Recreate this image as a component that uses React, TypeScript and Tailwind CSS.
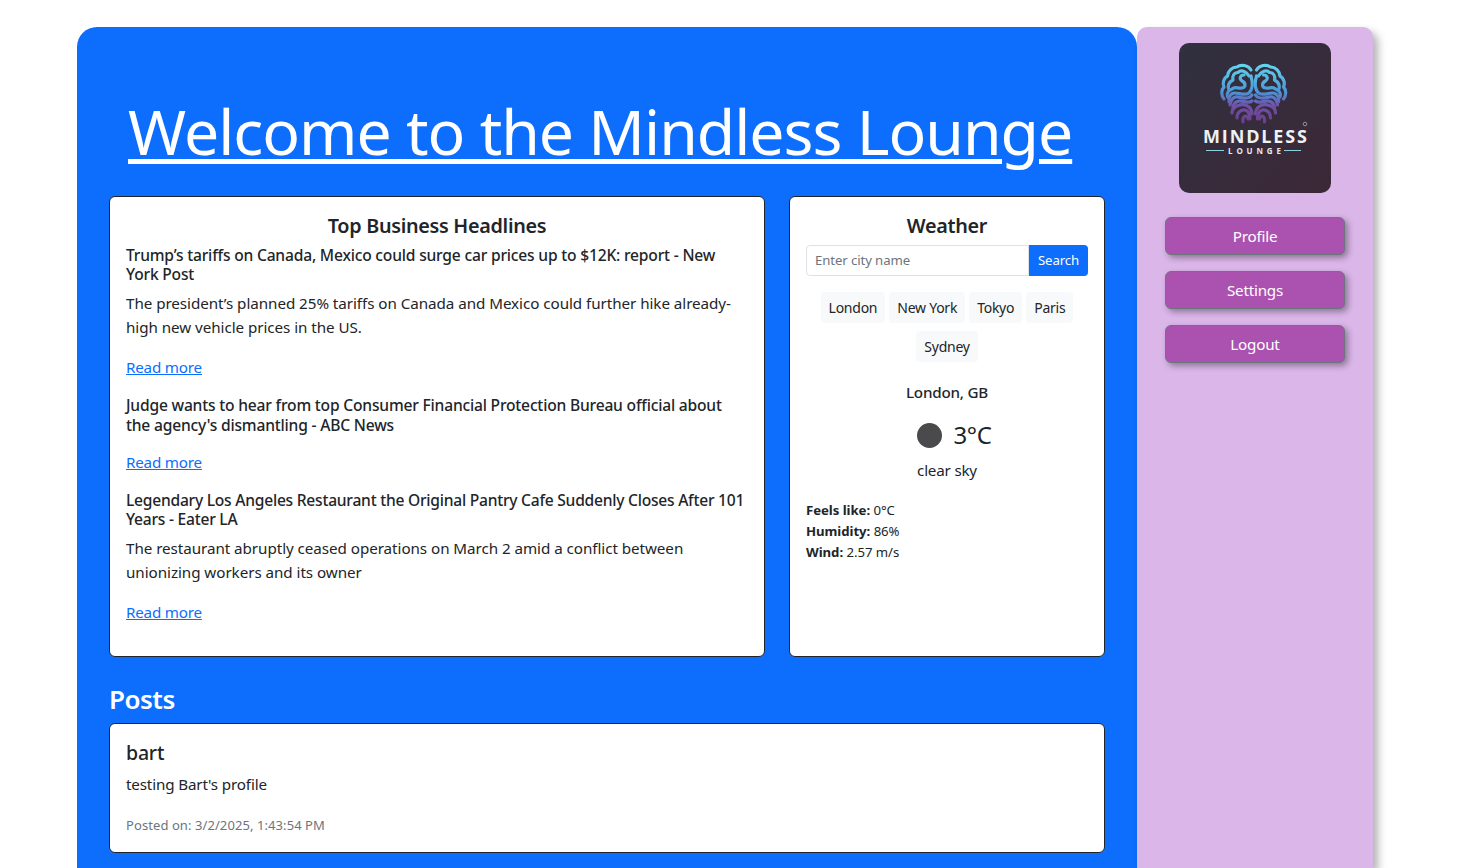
const Logo = () => {
  const half = (
    <g fill="none" stroke="url(#bg)" strokeWidth="3.2" strokeLinecap="round" strokeLinejoin="round">
      <path d="M72 27C69 22 62 21 58 24C53 24 49 28 48.500 33C45 35 43 40 45 44C42 47 42 52 45 56" />
      <path d="M70 33C67 28 62 26.500 59 29.500C55 29.500 53 33 54 37C50 39 48 43 50 47" />
      <path d="M65 32C61 32 60 36 63 38C67 40 67 44 63 45C59 46 56 43 53 46C50 47 47 50 48.500 54" />
      <path d="M72 33C74 40 74 46 70 50C66 53 60 50 56 50C52 50 49 54 50 59" />
      <path d="M73 52C70 57 63 55 59 54C55 53 52 56 51 62" />
      <path d="M73 58C70 61 65 58 61 58C57 58 54 61 54 65" />
      <path d="M53 70C53 63 64 59 70 64C72 66 73 68 73 71" />
      <path d="M58 75C58 67 66 65 69 69C71 71 71 73 71 76" />
      <path d="M64 79C63 73 68 71 69 76" />
    </g>
  );
  return (
    <svg viewBox="0 0 152 150" className="h-[150px] w-[152px] rounded-[10px]">
      <defs>
        <linearGradient id="lb" x1="0" y1="0" x2="1" y2="1">
          <stop offset="0" stopColor="#30303f" />
          <stop offset="1" stopColor="#3c2837" />
        </linearGradient>
        <linearGradient id="bg" gradientUnits="userSpaceOnUse" x1="0" y1="22" x2="0" y2="82">
          <stop offset="0" stopColor="#62d4ec" />
          <stop offset="0.45" stopColor="#4c94d6" />
          <stop offset="0.68" stopColor="#7050a8" />
          <stop offset="1" stopColor="#6a3c85" />
        </linearGradient>
      </defs>
      <rect width="152" height="150" fill="url(#lb)" />
      {half}
      <g transform="matrix(-1 0 0 1 149.5 0)">{half}</g>
      <text x="24" y="100" textLength="104" fill="#eef2f4" fontFamily="'Open Sans', sans-serif" fontSize="18" fontWeight="700">MINDLESS</text>
      <text x="49" y="111" textLength="53" fill="#e4e9ec" fontFamily="'Open Sans', sans-serif" fontSize="8" fontWeight="700">LOUNGE</text>
      <path d="M27 107.500H45M105 107.500H122" stroke="#8fd0de" strokeWidth="1.2" />
      <circle cx="126" cy="81" r="1.8" fill="none" stroke="#c8ccd2" strokeWidth="0.6" />
    </svg>
  );
};

const Story = ({ title, body, tight }: { title: string; body?: string; tight?: boolean }) => (
  <div className="mb-[17px]">
    <h3 className={tight ? "mb-[7px] text-[15.6px] leading-[19.2px] font-medium tracking-[-0.24px] text-[#212529]" : "mb-[7px] text-[15.6px] leading-[19.2px] font-medium tracking-[-0.19px] text-[#212529]"}>{title}</h3>
    {body && <p className="mb-4 text-[15.2px] leading-6 tracking-[-0.05px] text-[#212529]">{body}</p>}
    <a href="#" className={body ? "block text-[15.2px] leading-6 tracking-[-0.2px] text-[#0d6efd] underline" : "block pt-2 text-[15.2px] leading-6 tracking-[-0.2px] text-[#0d6efd] underline"}>Read more</a>
  </div>
);

const City = ({ name }: { name: string }) => (
  <button className="h-[31px] rounded-[4px] bg-[#f8f9fa] px-2 text-[14px] leading-[31px] tracking-[-0.25px] text-[#212529]">{name}</button>
);

const NavButton = ({ label }: { label: string }) => (
  <button className="h-[38px] w-[180px] rounded-md border border-[#6c757d] bg-[#ab52b0] text-[15.2px] tracking-[-0.2px] text-white shadow-[3px_3px_6px_rgba(0,0,0,0.35)]">{label}</button>
);

export default function App() {
  return (
    <div className="h-screen overflow-hidden bg-white font-['Noto_Sans',sans-serif]">
      <div className="ml-[77px] flex w-[1296px] pt-[27px]">
        <main className="min-h-[841px] w-[1060px] rounded-t-[20px] bg-[#0d6efd] px-8 pt-[26px]">
          <h1 className="ml-[19px] pt-[40px] text-[62.5px] leading-[75px] font-normal tracking-[-1px] whitespace-nowrap text-white underline decoration-[5px] underline-offset-[4px]">
            Welcome to the Mindless Lounge
          </h1>
          <div className="mt-[28px] flex gap-6">
            <section className="h-[461px] w-[656px] rounded-md border border-[#212529] bg-white px-4 pt-[17px]">
              <h2 className="mb-2 text-center text-[19.8px] leading-6 font-semibold tracking-[-0.3px] text-[#212529]">Top Business Headlines</h2>
              <Story
                title="Trump’s tariffs on Canada, Mexico could surge car prices up to $12K: report - New York Post"
                body="The president’s planned 25% tariffs on Canada and Mexico could further hike already-high new vehicle prices in the US."
              />
              <Story title="Judge wants to hear from top Consumer Financial Protection Bureau official about the agency's dismantling - ABC News" />
              <Story
                tight
                title="Legendary Los Angeles Restaurant the Original Pantry Cafe Suddenly Closes After 101 Years - Eater LA"
                body="The restaurant abruptly ceased operations on March 2 amid a conflict between unionizing workers and its owner"
              />
            </section>
            <section className="h-[461px] w-[316px] rounded-md border border-[#212529] bg-white px-4 pt-[17px]">
              <h2 className="mb-[7px] text-center text-[19.8px] leading-6 font-semibold tracking-[-0.3px] text-[#212529]">Weather</h2>
              <div className="flex h-[31px]">
                <input placeholder="Enter city name" className="min-w-0 flex-1 rounded-l-[4px] border border-[#dee2e6] px-2 pt-px text-[13.2px] tracking-[-0.1px] outline-none placeholder:text-[#6c757d]" />
                <button className="w-[59px] rounded-r-[4px] bg-[#0d6efd] pt-px text-[13.2px] tracking-[-0.1px] text-white">Search</button>
              </div>
              <div className="mt-4 flex flex-wrap justify-center gap-x-1 gap-y-2">
                <City name="London" />
                <City name="New York" />
                <City name="Tokyo" />
                <City name="Paris" />
                <City name="Sydney" />
              </div>
              <div className="mt-[18px] text-center text-[15.2px] leading-6 font-medium tracking-[-0.2px] text-[#212529]">London, GB</div>
              <div className="mt-[16px] flex items-center justify-center gap-3 pl-[14px]">
                <span className="h-[25px] w-[25px] rounded-full bg-[#4a4a4c]" />
                <span className="text-[24px] leading-[30px] font-normal tracking-[-0.4px] text-[#212529]">3°C</span>
              </div>
              <div className="mt-[8px] text-center text-[15.2px] leading-6 tracking-[-0.2px] text-[#212529]">clear sky</div>
              <div className="mt-[18px] text-[13.2px] leading-[21px] tracking-[-0.05px] text-[#212529]">
                <div><b className="font-bold tracking-[-0.05px]">Feels like:</b> 0°C</div>
                <div><b className="font-bold tracking-[-0.05px]">Humidity:</b> 86%</div>
                <div><b className="font-bold tracking-[-0.05px]">Wind:</b> 2.57 m/s</div>
              </div>
            </section>
          </div>
          <h2 className="mt-[23px] text-[26px] leading-[38px] font-semibold tracking-[-0.5px] text-white">Posts</h2>
          <article className="mt-[5px] h-[130px] w-[996px] rounded-md border border-[#212529] bg-white px-4 pt-[17px]">
            <h3 className="text-[19.5px] leading-6 font-medium tracking-[-0.2px] text-[#212529]">bart</h3>
            <p className="mt-[7px] text-[15.2px] leading-6 tracking-[-0.15px] text-[#212529]">testing Bart's profile</p>
            <p className="mt-[19px] text-[13px] leading-5 tracking-[0.08px] text-[#6c757d]">Posted on: 3/2/2025, 1:43:54 PM</p>
          </article>
        </main>
        <aside className="flex min-h-[841px] w-[236px] flex-col items-center rounded-t-[10px] bg-[#dbb6e9] pt-4 shadow-[5px_5px_8px_rgba(0,0,0,0.3)]">
          <Logo />
          <div className="mt-6 flex flex-col gap-4">
            <NavButton label="Profile" />
            <NavButton label="Settings" />
            <NavButton label="Logout" />
          </div>
        </aside>
      </div>
    </div>
  );
}
